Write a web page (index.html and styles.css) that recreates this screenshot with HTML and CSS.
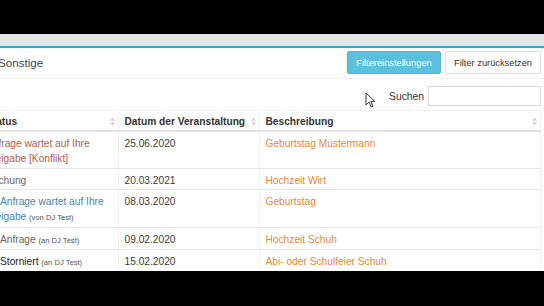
FILE: index.html
```html
<!DOCTYPE html>
<html lang="de">
<head>
    <meta charset="UTF-8">
    <meta name="viewport" content="width=device-width, initial-scale=1.0">
    <title>Anfragen</title>
    <link rel="stylesheet" href="styles.css">
</head>
<body>
    <div class="topbar"></div>

    <div class="page">
        <div class="box">
            <div class="box-header">
                <h3 class="box-title">Sonstige</h3>
                <div class="box-tools">
                    <button class="btn btn-info">Filtereinstellungen</button>
                    <button class="btn btn-default">Filter zurücksetzen</button>
                </div>
            </div>

            <div class="box-body">
                <div class="search">
                    <label for="search-input">Suchen</label>
                    <input type="text" id="search-input">
                </div>

                <table class="events">
                    <colgroup>
                        <col class="col-status">
                        <col class="col-date">
                        <col>
                    </colgroup>
                    <thead>
                        <tr>
                            <th>Status <svg class="sort" viewBox="0 0 6 10"><path d="M3 0 L6 4 L0 4 Z M3 10 L6 6 L0 6 Z"/></svg></th>
                            <th>Datum der Veranstaltung <svg class="sort" viewBox="0 0 6 10"><path d="M3 0 L6 4 L0 4 Z M3 10 L6 6 L0 6 Z"/></svg></th>
                            <th>Beschreibung <svg class="sort" viewBox="0 0 6 10"><path d="M3 0 L6 4 L0 4 Z M3 10 L6 6 L0 6 Z"/></svg></th>
                        </tr>
                    </thead>
                    <tbody>
                        <tr>
                            <td class="st-conflict">Anfrage wartet auf Ihre<br>Freigabe [Konflikt]</td>
                            <td>25.06.2020</td>
                            <td class="desc">Geburtstag Mustermann</td>
                        </tr>
                        <tr>
                            <td class="st-booked">Buchung</td>
                            <td>20.03.2021</td>
                            <td class="desc">Hochzeit Wirt</td>
                        </tr>
                        <tr>
                            <td class="st-waiting"><span class="flag"></span>Anfrage wartet auf Ihre<br>Freigabe <small>(von DJ Test)</small></td>
                            <td>08.03.2020</td>
                            <td class="desc">Geburtstag</td>
                        </tr>
                        <tr>
                            <td class="st-request"><span class="flag"></span>Anfrage <small>(an DJ Test)</small></td>
                            <td>09.02.2020</td>
                            <td class="desc">Hochzeit Schuh</td>
                        </tr>
                        <tr>
                            <td class="st-cancelled"><span class="flag"></span>Storniert <small>(an DJ Test)</small></td>
                            <td>15.02.2020</td>
                            <td class="desc">Abi- oder Schulfeier Schuh</td>
                        </tr>
                    </tbody>
                </table>
            </div>
        </div>
    </div>

    <svg class="cursor" viewBox="0 0 11 16"><path d="M1 1 L1 13 L4 10 L6.3 15 L8 14.2 L5.8 9.4 L9.8 9.4 Z"/></svg>
</body>
</html>
```

FILE: styles.css
```css
body {
    margin: 0;
    background-color: #000000;
    font-family: 'Liberation Sans', Arial, sans-serif;
    font-size: 10.2px;
    color: #3a3a3a;
    overflow: hidden;
    height: 306px;
}

.topbar {
    height: 34px;
    background-color: #000000;
}

.page {
    padding-top: 12px;
    background-color: #e4e4e4;
}

.box {
    margin-left: -22px;
    background: #ffffff;
    border-top: 2px solid #1cb1d8;
    height: 223px;
    overflow: hidden;
}

.box-header {
    height: 30px;
    display: flex;
    align-items: center;
    justify-content: space-between;
    padding: 0 3px 0 20px;
    border-bottom: 1px solid #f0f0f0;
}

.box-title {
    margin: 0 0 2px;
    font-size: 11.6px;
    font-weight: normal;
    color: #444444;
}

.box-tools {
    display: flex;
    gap: 4px;
    margin-bottom: 1px;
}

.btn {
    height: 23px;
    padding: 0;
    font-family: 'Liberation Sans', Arial, sans-serif;
    font-size: 9.3px;
    white-space: nowrap;
    border-radius: 2px;
    border: 1px solid #dddddd;
    cursor: pointer;
}

.btn-info {
    width: 94px;
    background-color: #5bc0de;
    border-color: #54b6d6;
    color: #ffffff;
}

.btn-default {
    width: 96px;
    background-color: #ffffff;
    color: #333333;
}

.box-body {
    padding: 0 3px 0 2px;
}

.search {
    display: flex;
    justify-content: flex-end;
    align-items: center;
    gap: 4px;
    padding: 7px 0 4px;
}

.search label {
    font-size: 10.3px;
    color: #333333;
}

.search input {
    width: 111px;
    height: 18px;
    padding: 0;
    border: 1px solid #d8d8d8;
    outline: none;
}

.events {
    width: 100%;
    table-layout: fixed;
    border-collapse: collapse;
    border-top: 1px solid #f0f0f0;
}

.events .col-status {
    width: 138px;
}

.events .col-date {
    width: 141px;
}

.events th {
    text-align: left;
    font-weight: bold;
    color: #333333;
    line-height: 15px;
    padding: 3px 3px 1px 6px;
    border-bottom: 2px solid #e2e2e2;
    border-right: 1px solid #f0f0f0;
    white-space: nowrap;
}

.events th .sort {
    float: right;
    width: 5px;
    height: 9px;
    margin-top: 3px;
    fill: #d4d4d4;
}

.events td {
    vertical-align: top;
    line-height: 15px;
    padding: 4px 6px 1.5px;
    border-bottom: 1px solid #e8e8e8;
    border-right: 1px solid #f0f0f0;
    white-space: nowrap;
}

.events td small {
    font-size: 7.6px;
    color: #555555;
}

.events .flag {
    display: inline-block;
    width: 14px;
}

.events .desc {
    color: #ea8738;
}

.st-conflict {
    color: #b55a4c;
}

.st-booked {
    color: #666666;
}

.st-waiting {
    color: #3f86b8;
}

.st-request {
    color: #6e6358;
}

.st-cancelled {
    color: #222222;
}

.cursor {
    position: absolute;
    left: 365px;
    top: 92px;
    width: 11px;
    height: 16px;
    fill: #ffffff;
    stroke: #000000;
    stroke-width: 0.8;
}
```
